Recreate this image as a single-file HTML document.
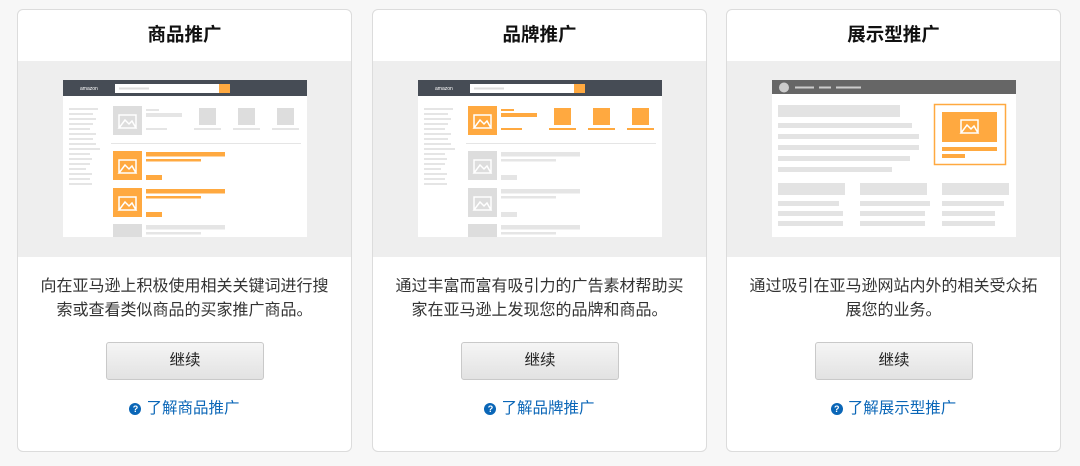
<!DOCTYPE html>
<html><head><meta charset="utf-8"><style>
*{margin:0;padding:0;box-sizing:border-box}
body{width:1080px;height:466px;background:#f7f7f7;font-family:"Liberation Sans","Noto Sans CJK SC",sans-serif;position:relative;overflow:hidden}
.card{position:absolute;top:9px;width:335px;height:443px;background:#fff;border:1px solid #dcdcdc;border-radius:6px;overflow:hidden}
.t{position:absolute;top:0;left:0;right:0;height:51px;line-height:50px;text-align:center;font-size:18.5px;font-weight:bold;color:#111}
.g{position:absolute;top:51px;left:0;right:0;height:196px;background:#eeeeee}
.g svg{position:absolute;left:45px;top:19px}
.d{position:absolute;top:265px;left:20px;right:20px;text-align:center;font-size:16px;line-height:24px;color:#333}
.b{position:absolute;top:332px;left:88px;width:158px;height:38px;border:1px solid #c9c9c9;border-radius:3px;background:linear-gradient(#f5f5f5,#e2e2e2);text-align:center;line-height:36px;font-size:15.5px;color:#222}
.l{position:absolute;top:387px;left:0;right:0;text-align:center;font-size:15.5px;color:#0a66b7;line-height:24px}
.q{display:inline-block;width:12px;height:12px;border-radius:50%;background:#0a66b7;color:#fff;font-size:9px;font-weight:bold;line-height:12px;vertical-align:1px;margin-right:5px;text-align:center}
</style></head><body>

<div class="card" style="left:17px">
<div class="t">商品推广</div>
<div class="g"><svg width="244" height="157" viewBox="0 0 244 157">
<rect width="244" height="157" fill="#fff"/>
<rect width="244" height="16" fill="#464c55"/>
<text x="17" y="10" font-size="5" fill="#fff" font-family="Liberation Sans">amazon</text>
<rect x="52" y="4" width="104" height="9" fill="#fff"/><rect x="56" y="7.5" width="30" height="2" fill="#ddd"/>
<rect x="156" y="4" width="11" height="9" fill="#ffa940"/>
<g fill="#e5e5e5"><rect x="6" y="28" width="29" height="2"/><rect x="6" y="33" width="24" height="2"/><rect x="6" y="38" width="27" height="2"/><rect x="6" y="43" width="24" height="2"/><rect x="6" y="48" width="21" height="2"/><rect x="6" y="53" width="27" height="2"/><rect x="6" y="58" width="24" height="2"/><rect x="6" y="63" width="27" height="2"/><rect x="6" y="68" width="31" height="2"/><rect x="6" y="73" width="21" height="2"/><rect x="6" y="78" width="23" height="2"/><rect x="6" y="83" width="21" height="2"/><rect x="6" y="88" width="17" height="2"/><rect x="6" y="93" width="23" height="2"/><rect x="6" y="98" width="21" height="2"/><rect x="6" y="103" width="23" height="2"/></g>
<rect x="50" y="26" width="29" height="29" fill="#ddd"/><path d="M56 48 L62 40 L66 44 L69 41 L73 48Z M56 35h17v13h-17z" fill="none" stroke="#fff" stroke-width="1.5"/>
<g fill="#e5e5e5"><rect x="83" y="29" width="13" height="2"/><rect x="83" y="33" width="36" height="4"/><rect x="83" y="48" width="21" height="2"/>
<rect x="136" y="28" width="17" height="17" fill="#ddd"/><rect x="175" y="28" width="17" height="17" fill="#ddd"/><rect x="214" y="28" width="17" height="17" fill="#ddd"/>
<rect x="131" y="48" width="27" height="2"/><rect x="170" y="48" width="27" height="2"/><rect x="209" y="48" width="27" height="2"/>
<rect x="48" y="63" width="190" height="1"/></g>
<rect x="50" y="71" width="29" height="29" fill="#ffa940"/><path d="M56 93 L62 85 L66 89 L69 86 L73 93Z M56 80h17v13h-17z" fill="none" stroke="#fff" stroke-width="1.5"/>
<rect x="83" y="72" width="79" height="4.5" fill="#ffa940"/><rect x="83" y="79" width="55" height="2.5" fill="#ffa940"/><rect x="83" y="95" width="16" height="5" fill="#ffa940"/>
<rect x="50" y="108" width="29" height="29" fill="#ffa940"/><path d="M56 130 L62 122 L66 126 L69 123 L73 130Z M56 117h17v13h-17z" fill="none" stroke="#fff" stroke-width="1.5"/>
<rect x="83" y="109" width="79" height="4.5" fill="#ffa940"/><rect x="83" y="116" width="55" height="2.5" fill="#ffa940"/><rect x="83" y="132" width="16" height="5" fill="#ffa940"/>
<rect x="50" y="144" width="29" height="20" fill="#ddd"/><rect x="83" y="145" width="79" height="4.5" fill="#e5e5e5"/><rect x="83" y="152" width="55" height="2.5" fill="#e5e5e5"/>
</svg></div>
<div class="d">向在亚马逊上积极使用相关关键词进行搜索或查看类似商品的买家推广商品。</div>
<div class="b">继续</div>
<div class="l"><span class="q">?</span>了解商品推广</div>
</div>

<div class="card" style="left:372px">
<div class="t">品牌推广</div>
<div class="g"><svg width="244" height="157" viewBox="0 0 244 157">
<rect width="244" height="157" fill="#fff"/>
<rect width="244" height="16" fill="#464c55"/>
<text x="17" y="10" font-size="5" fill="#fff" font-family="Liberation Sans">amazon</text>
<rect x="52" y="4" width="104" height="9" fill="#fff"/><rect x="56" y="7.5" width="30" height="2" fill="#ddd"/>
<rect x="156" y="4" width="11" height="9" fill="#ffa940"/>
<g fill="#e5e5e5"><rect x="6" y="28" width="29" height="2"/><rect x="6" y="33" width="24" height="2"/><rect x="6" y="38" width="27" height="2"/><rect x="6" y="43" width="24" height="2"/><rect x="6" y="48" width="21" height="2"/><rect x="6" y="53" width="27" height="2"/><rect x="6" y="58" width="24" height="2"/><rect x="6" y="63" width="27" height="2"/><rect x="6" y="68" width="31" height="2"/><rect x="6" y="73" width="21" height="2"/><rect x="6" y="78" width="23" height="2"/><rect x="6" y="83" width="21" height="2"/><rect x="6" y="88" width="17" height="2"/><rect x="6" y="93" width="23" height="2"/><rect x="6" y="98" width="21" height="2"/><rect x="6" y="103" width="23" height="2"/><rect x="48" y="63" width="190" height="1"/></g>
<rect x="50" y="26" width="29" height="29" fill="#ffa940"/><path d="M56 48 L62 40 L66 44 L69 41 L73 48Z M56 35h17v13h-17z" fill="none" stroke="#fff" stroke-width="1.5"/>
<g fill="#ffa940"><rect x="83" y="29" width="13" height="2"/><rect x="83" y="33" width="36" height="4"/><rect x="83" y="48" width="21" height="2"/>
<rect x="136" y="28" width="17" height="17"/><rect x="175" y="28" width="17" height="17"/><rect x="214" y="28" width="17" height="17"/>
<rect x="131" y="48" width="27" height="2"/><rect x="170" y="48" width="27" height="2"/><rect x="209" y="48" width="27" height="2"/></g>
<g fill="#ddd"><rect x="50" y="71" width="29" height="29"/><rect x="50" y="108" width="29" height="29"/><rect x="50" y="144" width="29" height="20"/></g>
<path d="M56 93 L62 85 L66 89 L69 86 L73 93Z M56 80h17v13h-17z M56 130 L62 122 L66 126 L69 123 L73 130Z M56 117h17v13h-17z" fill="none" stroke="#fff" stroke-width="1.5"/>
<g fill="#e5e5e5"><rect x="83" y="72" width="79" height="4.5"/><rect x="83" y="79" width="55" height="2.5"/><rect x="83" y="95" width="16" height="5"/>
<rect x="83" y="109" width="79" height="4.5"/><rect x="83" y="116" width="55" height="2.5"/><rect x="83" y="132" width="16" height="5"/>
<rect x="83" y="145" width="79" height="4.5"/><rect x="83" y="152" width="55" height="2.5"/></g>
</svg></div>
<div class="d">通过丰富而富有吸引力的广告素材帮助买家在亚马逊上发现您的品牌和商品。</div>
<div class="b">继续</div>
<div class="l"><span class="q">?</span>了解品牌推广</div>
</div>

<div class="card" style="left:726px">
<div class="t">展示型推广</div>
<div class="g"><svg width="244" height="157" viewBox="0 0 244 157">
<rect width="244" height="157" fill="#fff"/>
<rect width="244" height="14" fill="#666"/>
<circle cx="12" cy="7.5" r="5" fill="#ccc"/>
<g fill="#ccc"><rect x="23" y="6.5" width="19" height="2"/><rect x="47" y="6.5" width="12" height="2"/><rect x="64" y="6.5" width="25" height="2"/></g>
<g fill="#e3e3e3"><rect x="6" y="25" width="122" height="12"/><rect x="6" y="43" width="134" height="5"/><rect x="6" y="54" width="141" height="5"/><rect x="6" y="65" width="141" height="5"/><rect x="6" y="76" width="132" height="5"/><rect x="6" y="87" width="114" height="5"/>
<rect x="6" y="103" width="67" height="12"/><rect x="88" y="103" width="67" height="12"/><rect x="170" y="103" width="67" height="12"/>
<rect x="6" y="121" width="61" height="5"/><rect x="88" y="121" width="70" height="5"/><rect x="170" y="121" width="62" height="5"/>
<rect x="6" y="131" width="65" height="5"/><rect x="88" y="131" width="65" height="5"/><rect x="170" y="131" width="53" height="5"/>
<rect x="6" y="141" width="65" height="5"/><rect x="88" y="141" width="65" height="5"/><rect x="170" y="141" width="53" height="5"/></g>
<rect x="162.5" y="24.5" width="71" height="60" fill="none" stroke="#ffa940" stroke-width="1.5"/>
<rect x="170" y="32" width="55" height="30" fill="#ffa940"/>
<path d="M189 53 L195 45 L199 49 L202 46 L206 53Z M189 40h17v13h-17z" fill="none" stroke="#fff" stroke-width="1.5"/>
<rect x="170" y="67" width="55" height="4" fill="#ffa940"/><rect x="170" y="74" width="23" height="4" fill="#ffa940"/>
</svg></div>
<div class="d">通过吸引在亚马逊网站内外的相关受众拓展您的业务。</div>
<div class="b">继续</div>
<div class="l"><span class="q">?</span>了解展示型推广</div>
</div>

</body></html>
